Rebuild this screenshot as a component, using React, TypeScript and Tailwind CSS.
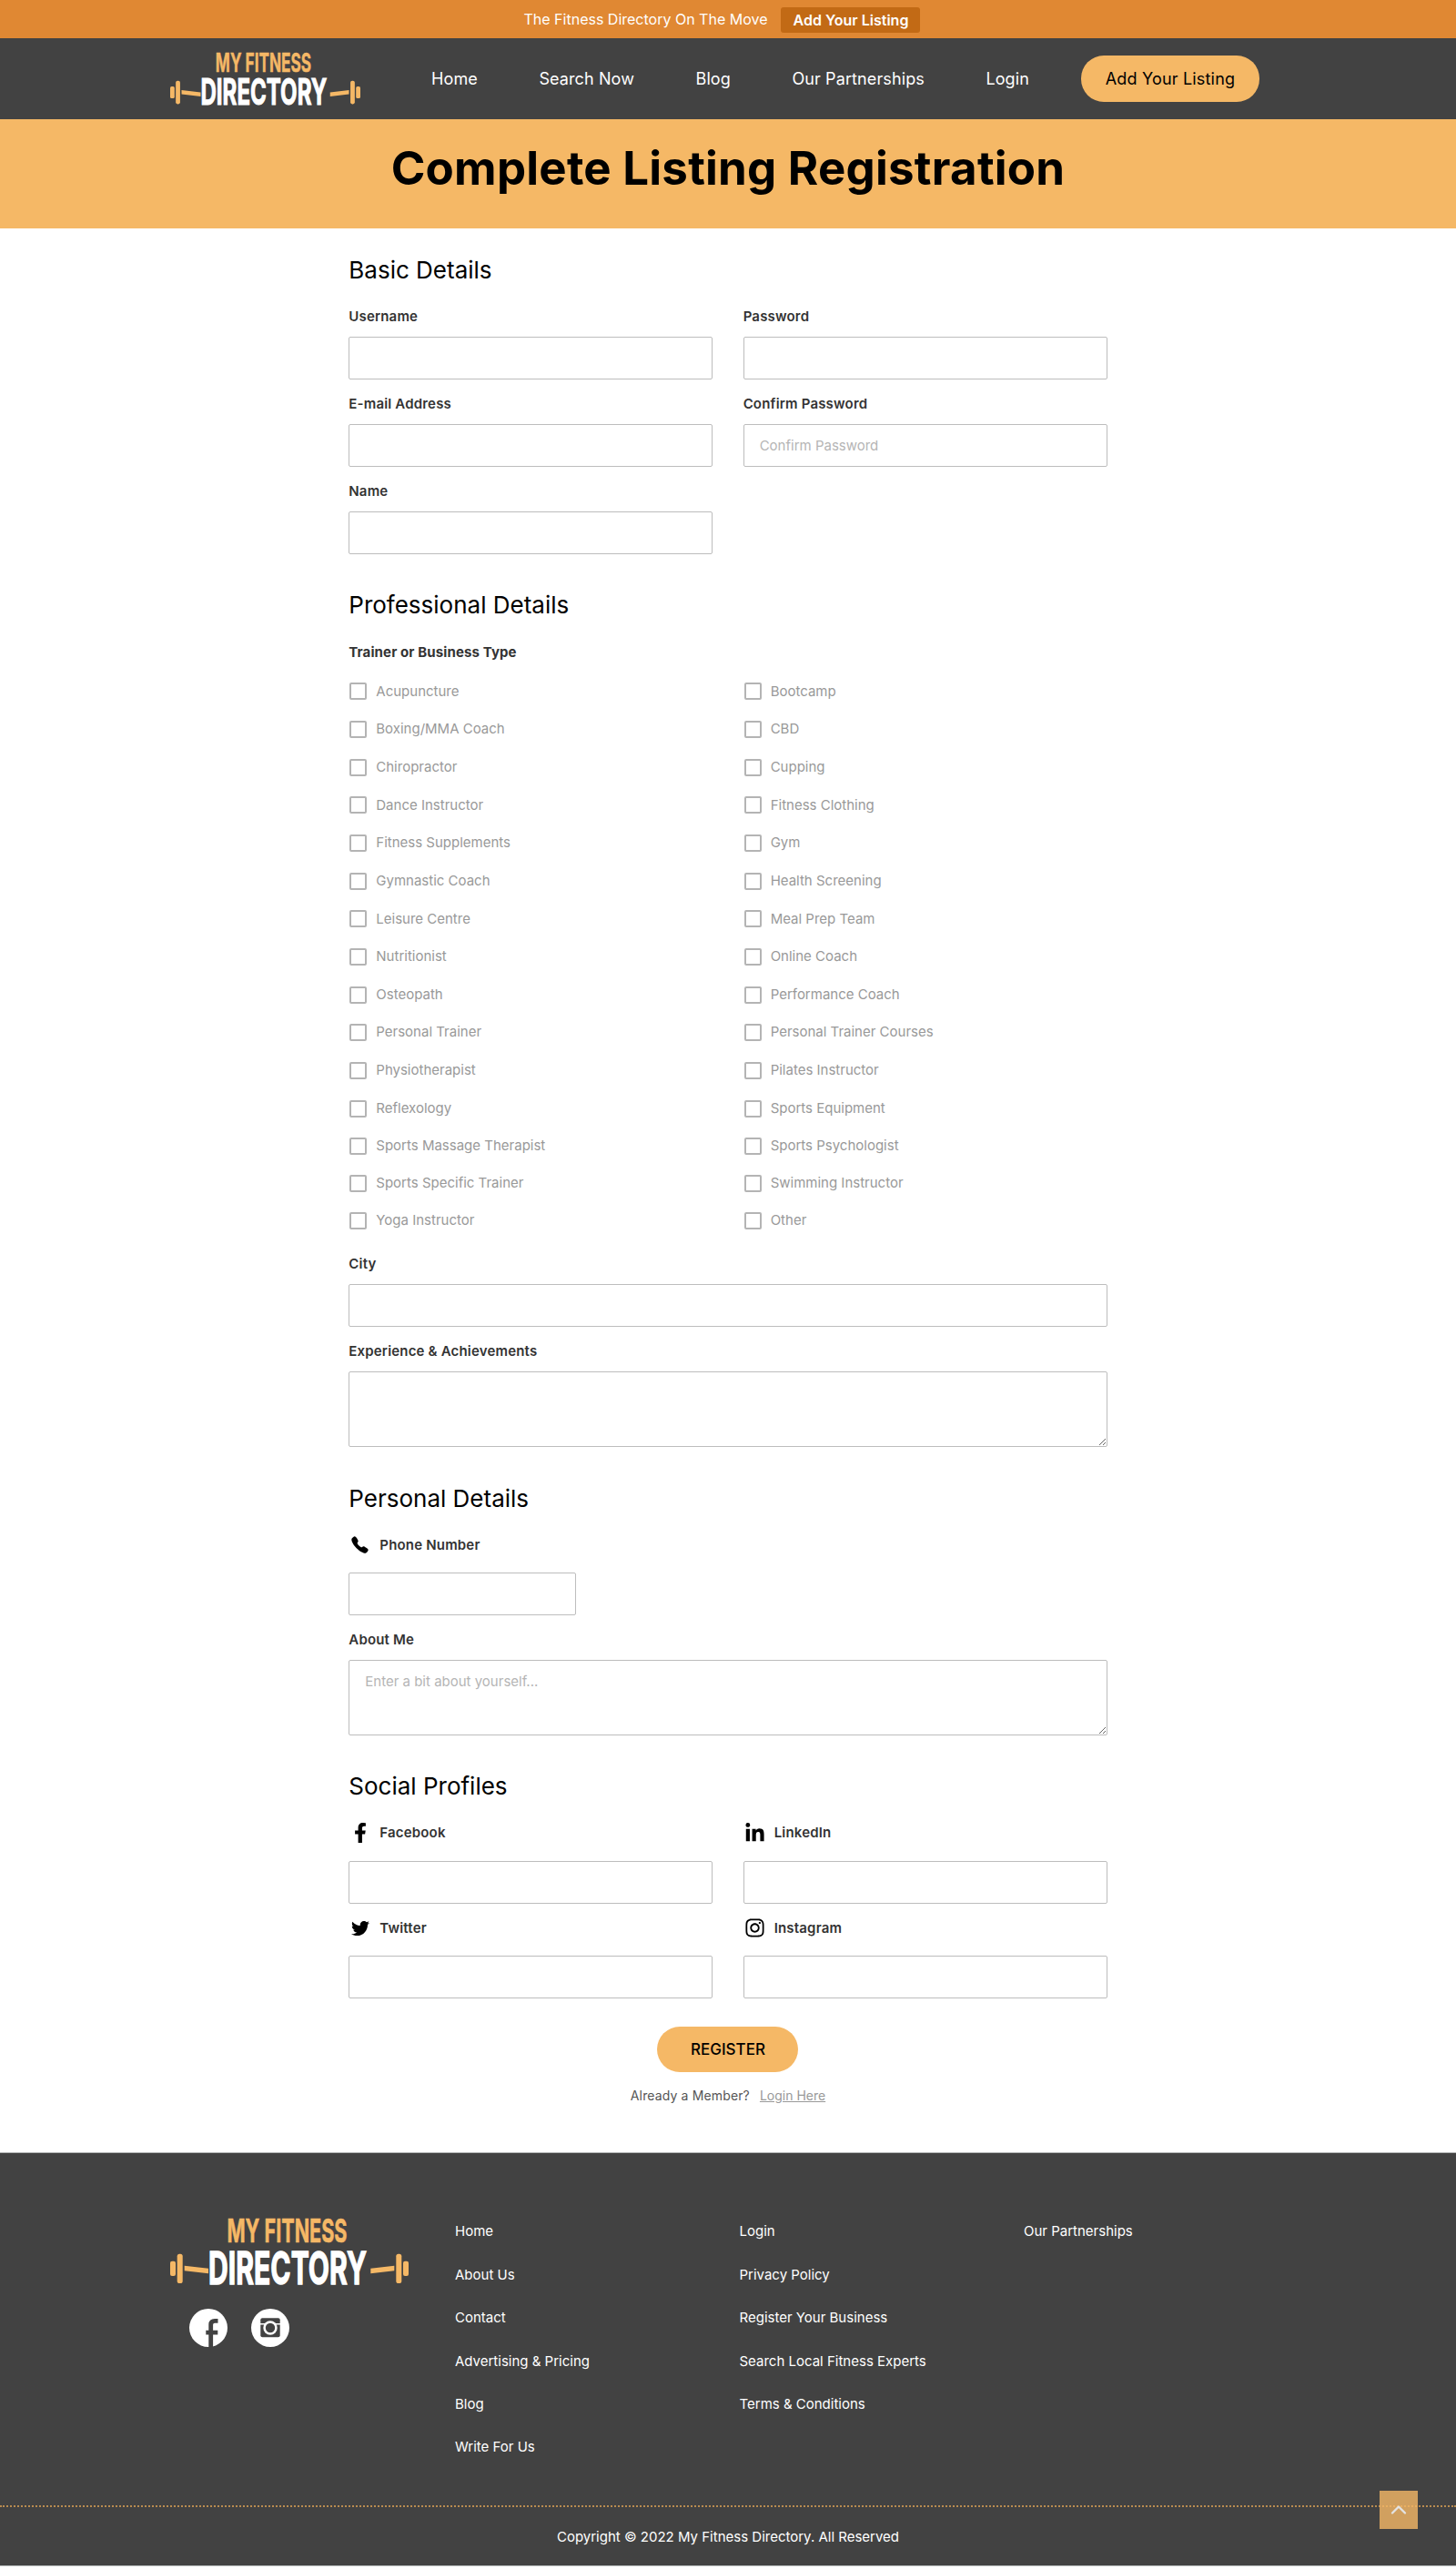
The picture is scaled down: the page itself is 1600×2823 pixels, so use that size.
import React from "react";
import {
  FaFacebookF,
  FaInstagram,
  FaLinkedinIn,
  FaTwitter,
} from "react-icons/fa";
import { IoCall } from "react-icons/io5";
import { ChevronUp } from "lucide-react";

const navLinks = ["Home", "Search Now", "Blog", "Our Partnerships", "Login"];

const businessTypes = [
  "Acupuncture",
  "Bootcamp",
  "Boxing/MMA Coach",
  "CBD",
  "Chiropractor",
  "Cupping",
  "Dance Instructor",
  "Fitness Clothing",
  "Fitness Supplements",
  "Gym",
  "Gymnastic Coach",
  "Health Screening",
  "Leisure Centre",
  "Meal Prep Team",
  "Nutritionist",
  "Online Coach",
  "Osteopath",
  "Performance Coach",
  "Personal Trainer",
  "Personal Trainer Courses",
  "Physiotherapist",
  "Pilates Instructor",
  "Reflexology",
  "Sports Equipment",
  "Sports Massage Therapist",
  "Sports Psychologist",
  "Sports Specific Trainer",
  "Swimming Instructor",
  "Yoga Instructor",
  "Other",
];

const footerColumns = [
  ["Home", "About Us", "Contact", "Advertising & Pricing", "Blog", "Write For Us"],
  [
    "Login",
    "Privacy Policy",
    "Register Your Business",
    "Search Local Fitness Experts",
    "Terms & Conditions",
  ],
  ["Our Partnerships"],
];

const Logo: React.FC<{ className?: string }> = ({ className }) => (
  <svg
    viewBox="0 0 262 76"
    className={`overflow-visible ${className || ""}`}
    aria-label="My Fitness Directory"
  >
    <g fill="#f5b866">
      <rect x="0" y="47.7" width="6" height="16.3" rx="2" />
      <rect x="7.7" y="39.7" width="6" height="32.3" rx="2.6" />
      <path d="M15.7 52.7 42 55.7V61.3L15.7 58.3Z" />
      <path d="M220.3 55.7 246.3 52.7V58.3L220.3 61.3Z" />
      <rect x="248.3" y="39.7" width="6" height="32.3" rx="2.6" />
      <rect x="256" y="47.7" width="6" height="16.3" rx="2" />
      <text
        x="62.5"
        y="27"
        textLength="132"
        lengthAdjust="spacingAndGlyphs"
        stroke="#f5b866"
        strokeWidth="0.6"
        className="font-['Inter',sans-serif] text-[35px] font-bold"
      >
        MY FITNESS
      </text>
    </g>
    <text
      x="42"
      y="72.6"
      textLength="174"
      lengthAdjust="spacingAndGlyphs"
      fill="#fff"
      stroke="#fff"
      strokeWidth="1.4"
      className="font-['Inter',sans-serif] text-[50px] font-bold"
    >
      DIRECTORY
    </text>
  </svg>
);

const inputClass =
  "block w-full border border-[#bdbdbd] rounded-[2px] bg-white px-[17px] text-[15px] placeholder:text-[#b5b5b5] outline-none";

interface FieldProps {
  label: string;
  icon?: React.ReactNode;
  type?: string;
  placeholder?: string;
  multiline?: boolean;
  className?: string;
}

const Field: React.FC<FieldProps> = ({
  label,
  icon,
  type = "text",
  placeholder,
  multiline,
  className,
}) => (
  <label className={`block mb-[17px] ${className || ""}`}>
    <span
      className={`flex items-center h-5 text-[15px] font-semibold tracking-[0.012em] text-[#333] ${
        icon ? "mb-[20.5px] gap-[9px]" : "mb-3"
      }`}
    >
      {icon && (
        <span className="flex w-[25px] justify-center text-black">{icon}</span>
      )}
      {label}
    </span>
    {multiline ? (
      <textarea
        placeholder={placeholder}
        className={`${inputClass} h-[83px] py-[13px] leading-5`}
      />
    ) : (
      <input
        type={type}
        placeholder={placeholder}
        className={`${inputClass} h-[47px]`}
      />
    )}
  </label>
);

const SectionTitle: React.FC<{ children: React.ReactNode }> = ({ children }) => (
  <h2 className="mb-[23px] pt-px text-[26px] leading-9 text-black">{children}</h2>
);

export default function App() {
  return (
    <div className="relative h-[2823px] bg-white font-['Inter',sans-serif]">
      <div className="flex h-[42px] items-center justify-center gap-[15px] bg-[#e08833] pr-[13px] text-base text-white">
        <span>The Fitness Directory On The Move</span>
        <a className="mt-[2px] flex h-7 w-[153px] items-center justify-center rounded-[3px] bg-[#c26a15] font-semibold">
          Add Your Listing
        </a>
      </div>

      <header className="flex h-[89px] items-center bg-[#424242] pl-[187px] text-[18px] text-white">
        <Logo className="mt-px w-[209px]" />
        <nav className="ml-[78px] flex gap-[67.5px] tracking-[0.006em]">
          {navLinks.map((link) => (
            <a key={link}>{link}</a>
          ))}
        </nav>
        <a className="ml-[57px] flex h-[51px] w-[196px] items-center justify-center rounded-[25px] bg-[#f5b866] tracking-[0.01em] text-black">
          Add Your Listing
        </a>
      </header>

      <div className="flex h-[120px] justify-center bg-[#f5b866] pt-6">
        <h1 className="text-[51px] leading-[60px] font-bold tracking-[0.0045em] text-black">
          Complete Listing Registration
        </h1>
      </div>

      <main className="mx-auto w-[833.4px] pt-[27px]">
        <SectionTitle>Basic Details</SectionTitle>
        <div className="grid grid-cols-2 gap-x-[33.3px]">
          <Field label="Username" />
          <Field label="Password" type="password" />
          <Field label="E-mail Address" />
          <Field
            label="Confirm Password"
            type="password"
            placeholder="Confirm Password"
          />
          <Field label="Name" />
        </div>

        <div className="pt-5">
          <SectionTitle>Professional Details</SectionTitle>
          <p className="mb-3 pt-px text-[15px] leading-5 font-bold tracking-[0.008em] text-[#333]">
            Trainer or Business Type
          </p>
          <div className="mb-[17px] grid grid-cols-2 gap-x-[33.3px]">
            {businessTypes.map((type) => (
              <label
                key={type}
                className="flex h-[41.67px] items-center gap-[10px] pl-px text-[15px] text-[#999] nth-[n+25]:h-[41px]"
              >
                <input
                  type="checkbox"
                  className="size-[19px] appearance-none rounded-[2px] border-2 border-[#b4b4b4]"
                />
                {type}
              </label>
            ))}
          </div>
          <Field label="City" />
          <Field label="Experience & Achievements" multiline />
        </div>

        <div className="pt-[21px]">
          <SectionTitle>Personal Details</SectionTitle>
          <Field
            label="Phone Number"
            icon={<IoCall size={21} />}
            className="w-[250px]"
          />
          <Field
            label="About Me"
            placeholder="Enter a bit about yourself..."
            multiline
          />
        </div>

        <div className="pt-5">
          <SectionTitle>Social Profiles</SectionTitle>
          <div className="grid grid-cols-2 gap-x-[33.3px]">
            <Field label="Facebook" icon={<FaFacebookF size={22} />} />
            <Field label="LinkedIn" icon={<FaLinkedinIn size={23} />} />
            <Field label="Twitter" icon={<FaTwitter size={20} />} />
            <Field label="Instagram" icon={<FaInstagram size={23} />} />
          </div>
        </div>

        <div className="flex flex-col items-center pt-[14px]">
          <button className="h-[50px] w-[155px] rounded-[25px] bg-[#f5b866] text-[17px] font-medium text-black">
            REGISTER
          </button>
          <p className="mt-4 flex gap-[11px] text-[14px] leading-5 text-[#555]">
            <span className="tracking-[0.01em]">Already a Member?</span>
            <a className="text-[#999] underline">Login Here</a>
          </p>
        </div>
      </main>

      <footer className="mt-[52px] h-[454.5px] border-y border-[#b3b6b6] bg-[#424242] text-[15px] text-white">
        <div className="flex h-[388.5px] border-b-2 border-dotted border-[#b88b50] pt-[71px] pl-[187px]">
          <div className="w-[313px]">
            <Logo className="w-[262px]" />
            <div className="mt-6 flex gap-[26px] pl-[21px]">
              <svg viewBox="0 0 42 42" className="size-[42px]">
                <circle cx="21" cy="21" r="21" fill="#fff" />
                <path
                  d="M23.7 43V17.5Q23.7 13.4 28 13.4H31.5M18.3 26.2H31.3"
                  fill="none"
                  stroke="#424242"
                  strokeWidth="4.8"
                />
              </svg>
              <svg viewBox="0 0 42 42" className="size-[42px]">
                <circle cx="21" cy="21" r="21" fill="#fff" />
                <rect x="10.3" y="10.3" width="21.4" height="21" rx="2" fill="#424242" />
                <path d="M10 16.8H32" stroke="#fff" strokeWidth="1.5" />
                <circle cx="21" cy="21" r="7.7" fill="#fff" />
                <circle cx="21" cy="21" r="5.2" fill="#424242" />
              </svg>
            </div>
          </div>
          {footerColumns.map((links) => (
            <ul key={links[0]} className="w-[312.5px] pt-[3px]">
              {links.map((link) => (
                <li key={link} className="mb-[23.4px] leading-6">
                  <a>{link}</a>
                </li>
              ))}
            </ul>
          ))}
        </div>
        <p className="pt-[23px] text-center leading-5">
          Copyright © 2022 My Fitness Directory. All Reserved
        </p>
      </footer>

      <button className="absolute right-[42px] bottom-[44px] flex size-[42px] items-center justify-center bg-[#f5b866]/80 text-[#e3e3e3]">
        <ChevronUp size={28} />
      </button>
    </div>
  );
}
